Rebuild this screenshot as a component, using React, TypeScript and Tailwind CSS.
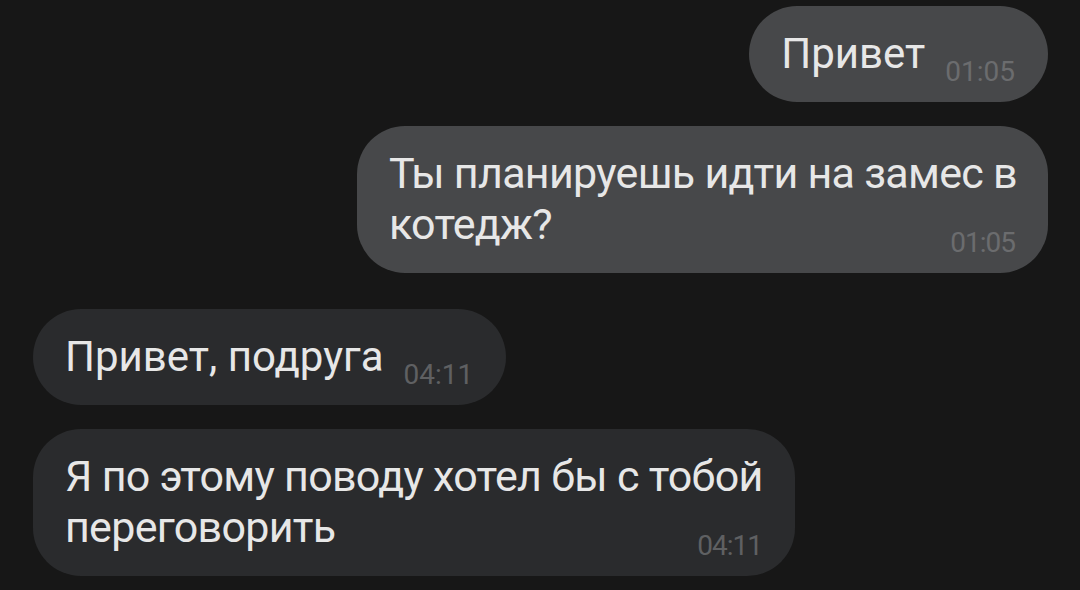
const messages = [
  { id: 1, out: true, text: "Привет", time: "01:05" },
  { id: 2, out: true, text: "Ты планируешь идти на замес в котедж?", time: "01:05", width: "w-[691px]" },
  { id: 3, out: false, text: "Привет, подруга", time: "04:11" },
  { id: 4, out: false, text: "Я по этому поводу хотел бы с тобой переговорить", time: "04:11", width: "w-[762px]" },
]

// multi-line bubbles in the screenshot are set a bit tighter
function Bubble({ out, text, time, width }: { out: boolean; text: string; time: string; width?: string }) {
  const multi = !!width
  return (
    <div
      className={`flow-root rounded-[48px] pl-[32px] pt-[22px] pb-[22px] leading-[51px] text-[#e7e7e7] ${
        out ? "bg-[#47484a]" : "bg-[#2a2b2d]"
      } ${multi ? `${width} pr-[28px] text-[43px] tracking-[-0.7px]` : "w-fit pr-[33px] text-[42px]"}`}
    >
      {text}
      <span
        className={`float-right mt-[36px] text-[28px] leading-[16px] ${multi ? "mr-[5px] tracking-[-1px]" : "ml-[20px]"} ${
          out ? "text-[#6b6c6e]" : "text-[#5f6062]"
        }`}
      >
        {time}
      </span>
    </div>
  )
}

export default function App() {
  return (
    <div
      className="w-[1080px] h-[590px] overflow-hidden bg-[#171717] px-[32px] pt-[6px]"
      style={{ fontFamily: "Roboto, 'Noto Sans', sans-serif" }}
    >
      <div className="flex flex-col items-end gap-[24px]">
        <Bubble {...messages[0]} />
        <Bubble {...messages[1]} />
      </div>
      <div className="mt-[36px] flex flex-col items-start gap-[24px] pl-[1px]">
        <Bubble {...messages[2]} />
        <Bubble {...messages[3]} />
      </div>
    </div>
  )
}
